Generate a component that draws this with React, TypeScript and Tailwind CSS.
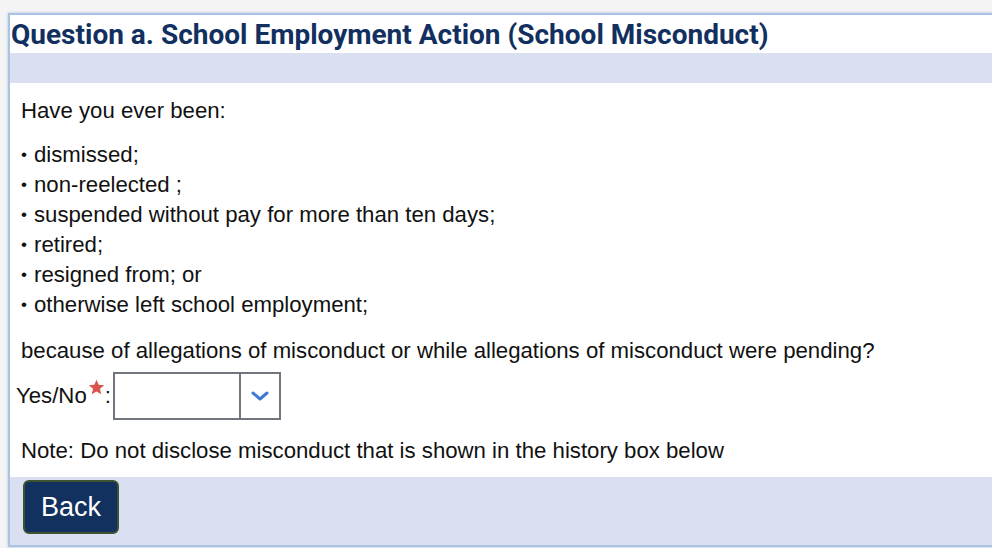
export default function App() {
  const items = [
    "dismissed;",
    "non-reelected ;",
    "suspended without pay for more than ten days;",
    "retired;",
    "resigned from; or",
    "otherwise left school employment;",
  ];

  return (
    <div className="h-[548px] w-[992px] overflow-hidden bg-[#f4f4f4] pl-[8px] pt-[13px]">
      <div className="w-[1000px] border-l-2 border-t-2 border-b-2 border-[#a9c3e5] bg-white shadow-[0_0_3px_rgba(120,150,200,0.5)]">
        <h2 className="h-[38px] pl-[1px] pt-[5px] font-['Roboto',sans-serif] text-[28px] font-bold leading-[30px] text-[#12305f]">
          Question a. School Employment Action (School Misconduct)
        </h2>
        <div className="h-[30px] bg-[#dae0f1]" />

        <div className="px-[11px] pt-[13px] font-['Liberation_Sans',Arial,sans-serif] text-[22.2px] leading-[30px] text-[#111]">
          <p>Have you ever been:</p>
          <ul className="mt-[14px]">
            {items.map((item) => (
              <li key={item} className="flex">
                <span className="w-[13px] text-[17px]">•</span>
                <span>{item}</span>
              </li>
            ))}
          </ul>
          <p className="mt-[16px]">
            because of allegations of misconduct or while allegations of misconduct were pending?
          </p>

          <div className="-ml-[5px] mt-[6px] flex items-center">
            <span>Yes/No</span>
            <svg className="relative -top-[9px] ml-[1px]" width="17" height="16" viewBox="0 0 24 23">
              <path d="M12 1l3.1 7.2 7.9.7-6 5.2 1.8 7.7L12 17.8 5.2 21.8 7 14.1 1 8.9l7.9-.7z" fill="#d9534f" />
            </svg>
            <span>:</span>
            <div className="ml-[2px] flex h-[48px] w-[168px] border-2 border-[#70757e] bg-white">
              <div className="flex-1 border-r-2 border-[#70757e]" />
              <div className="flex w-[38px] items-center justify-center">
                <svg width="18" height="12" viewBox="0 0 18 12" fill="none">
                  <path d="M2 3l7 6 7-6" stroke="#3b7bd4" strokeWidth="3" strokeLinecap="round" strokeLinejoin="round" />
                </svg>
              </div>
            </div>
          </div>

          <p className="mt-[16px]">Note: Do not disclose misconduct that is shown in the history box below</p>
        </div>

        <div className="mt-[11px] h-[68px] bg-[#dae0f1] pl-[13px] pt-[3px]">
          <button className="h-[54px] w-[96px] rounded-[6px] border-2 border-[#3e5131] bg-[#13315f] font-['Liberation_Sans',Arial,sans-serif] text-[27px] text-white">
            Back
          </button>
        </div>
      </div>
    </div>
  );
}
